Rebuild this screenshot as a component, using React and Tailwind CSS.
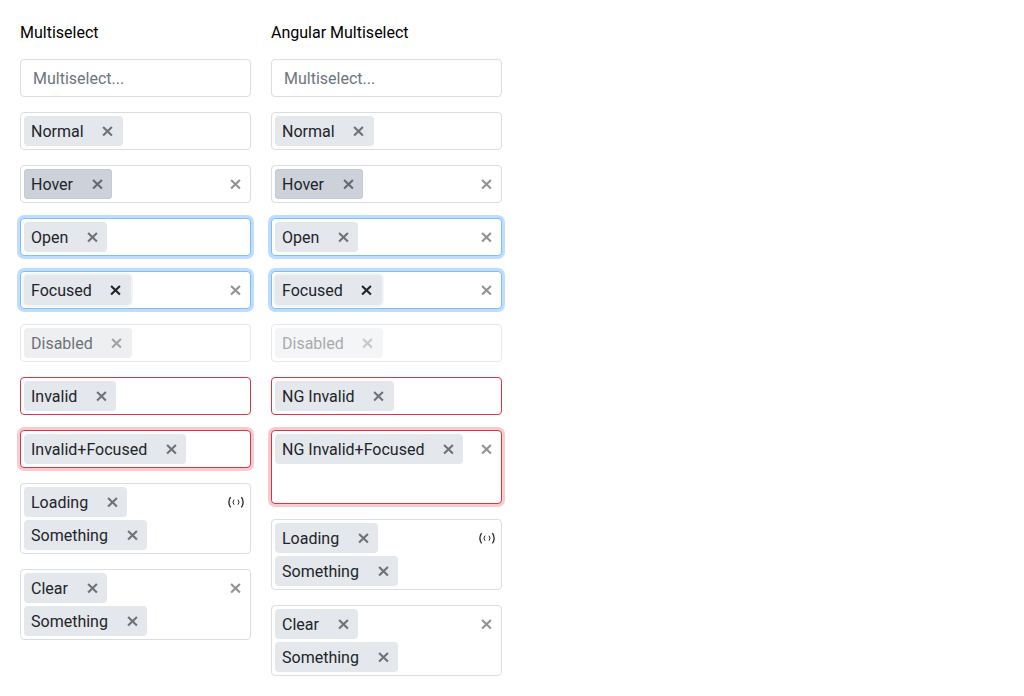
import { clsx } from "clsx";

function CloseIcon({ className }) {
  return (
    <svg viewBox="0 0 16 16" className={clsx("size-4 shrink-0", className)}>
      <path d="M4.1 3.9L12.9 12.5M12.9 3.9L4.1 12.5" stroke="currentColor" strokeWidth="2.1" fill="none" />
    </svg>
  );
}

function LoadingIcon() {
  return (
    <svg viewBox="0 0 18 16" className="h-4 w-[18px] text-[#212529]" fill="none" stroke="currentColor">
      <path d="M3.6 3.1Q0.1 8.2 3.6 13.3M14.4 3.1Q17.9 8.2 14.4 13.3" strokeWidth="1.3" />
      <path d="M7 5.7Q4.9 8.2 7 10.7M11 5.7Q13.1 8.2 11 10.7" strokeWidth="1" />
    </svg>
  );
}

const chipStates = {
  normal: "bg-[#e4e7eb]",
  hover: "bg-[#cdd1da] shadow-[inset_0_0_0_1px_#c5cad4]",
  focused: "bg-[#e4e7eb] shadow-[0_0_0_2px_#f3f4f6]",
};

function Chip({ label, state = "normal" }) {
  return (
    <div className={clsx("flex h-[30px] items-center gap-[15.6px] rounded-[4px] pr-[7.4px] pl-[7px]", chipStates[state])}>
      <span className="pt-0.5">{label}</span>
      <CloseIcon className={state === "focused" ? "text-[#212529]" : "text-[#212529]/60"} />
    </div>
  );
}

const boxStates = {
  normal: "border-[#dcdddf]",
  focused: "border-[#80bdff] shadow-[0_0_0_3px_#bfdeff]",
  disabled: "border-[#dcdddf] opacity-65",
  invalid: "border-[#dc3545]",
  invalidFocused: "border-[#dc3545] shadow-[0_0_0_3px_#f6ccd0]",
};

function MultiSelect({ items, state = "normal", chipState, clear, loading, tall, faded }) {
  return (
    <div
      className={clsx(
        "flex w-[231px] items-start justify-between rounded-[4px] border bg-white p-[3px] text-[#212529]",
        tall ? "h-[74px]" : "min-h-[38px]",
        boxStates[state]
      )}
    >
      {items ? (
        <div className={clsx("flex flex-col items-start gap-[3px]", faded && "opacity-60")}>
          {items.map((item) => (
            <Chip key={item} label={item} state={chipState} />
          ))}
        </div>
      ) : (
        <span className="h-[30px] pl-[9px] leading-8 text-[#6c757d]">Multiselect...</span>
      )}
      {clear && (
        <span className="flex h-[30px] items-center pr-1">
          <CloseIcon className="text-[#212529]/50" />
        </span>
      )}
      {loading && (
        <span className="flex h-[30px] items-center pr-[2px]">
          <LoadingIcon />
        </span>
      )}
    </div>
  );
}

function Column({ title, children }) {
  return (
    <section className="flex flex-col gap-[15px]">
      <h2 className="pt-0.5 leading-[22px] text-black">{title}</h2>
      {children}
    </section>
  );
}

export default function App() {
  return (
    <main className="flex h-[696px] items-start gap-5 bg-white px-5 pt-5 font-['Roboto',sans-serif] text-[16px]">
      <Column title="Multiselect">
        <MultiSelect />
        <MultiSelect items={["Normal"]} />
        <MultiSelect items={["Hover"]} chipState="hover" clear />
        <MultiSelect items={["Open"]} state="focused" />
        <MultiSelect items={["Focused"]} state="focused" chipState="focused" clear />
        <MultiSelect items={["Disabled"]} state="disabled" />
        <MultiSelect items={["Invalid"]} state="invalid" />
        <MultiSelect items={["Invalid+Focused"]} state="invalidFocused" />
        <MultiSelect items={["Loading", "Something"]} loading />
        <MultiSelect items={["Clear", "Something"]} clear />
      </Column>
      <Column title="Angular Multiselect">
        <MultiSelect />
        <MultiSelect items={["Normal"]} />
        <MultiSelect items={["Hover"]} chipState="hover" clear />
        <MultiSelect items={["Open"]} state="focused" clear />
        <MultiSelect items={["Focused"]} state="focused" chipState="focused" clear />
        <MultiSelect items={["Disabled"]} state="disabled" faded />
        <MultiSelect items={["NG Invalid"]} state="invalid" />
        <MultiSelect items={["NG Invalid+Focused"]} state="invalidFocused" clear tall />
        <MultiSelect items={["Loading", "Something"]} loading />
        <MultiSelect items={["Clear", "Something"]} clear />
      </Column>
    </main>
  );
}
